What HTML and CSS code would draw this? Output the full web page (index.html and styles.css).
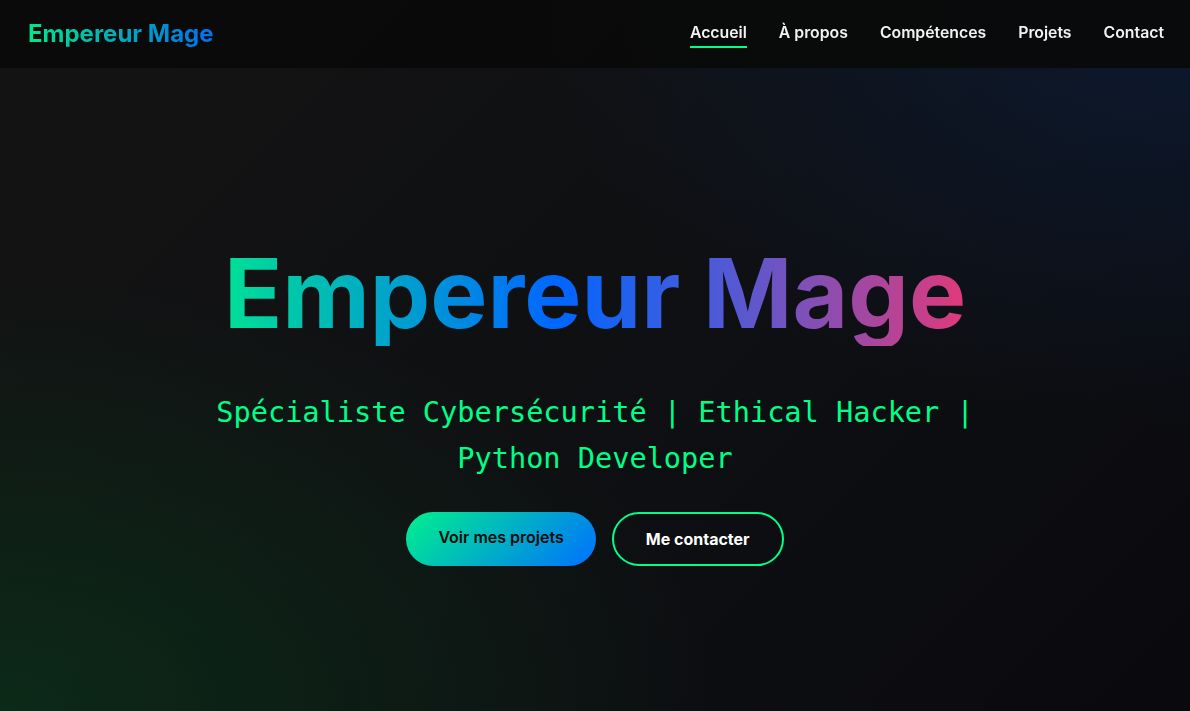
FILE: index.html
```html
<!DOCTYPE html>
<html lang="fr">
<head>
<meta charset="utf-8">
<title>Empereur Mage</title>
<link rel="stylesheet" href="styles.css">
</head>
<body>
<header class="navbar">
  <a class="logo" href="#">Empereur Mage</a>
  <nav class="nav-links">
    <a class="nav-link active" href="#">Accueil</a>
    <a class="nav-link" href="#">À propos</a>
    <a class="nav-link" href="#">Compétences</a>
    <a class="nav-link" href="#">Projets</a>
    <a class="nav-link" href="#">Contact</a>
  </nav>
</header>
<main class="hero">
  <div class="hero-content">
    <h1 class="hero-title">Empereur Mage</h1>
    <p class="hero-subtitle">Spécialiste Cybersécurité | Ethical Hacker | Python Developer</p>
    <div class="hero-buttons">
      <a class="btn btn-primary" href="#">Voir mes projets</a>
      <a class="btn btn-outline" href="#">Me contacter</a>
    </div>
  </div>
</main>
</body>
</html>
```
FILE: styles.css
```css
* { box-sizing: border-box; margin: 0; padding: 0; }
html, body { height: 100%; }
body {
  font-family: Inter, "Noto Sans", sans-serif;
  background: #0a0a0a;
  color: #fff;
  overflow: hidden;
}
a { text-decoration: none; color: inherit; }

.navbar {
  position: fixed;
  top: 0; left: 0; right: 0;
  height: 68px;
  display: flex;
  align-items: center;
  justify-content: space-between;
  padding: 0 26px 2px 28px;
  background: rgba(10,10,10,0.95);
  z-index: 10;
}
.logo {
  font-size: 24px;
  font-weight: 700;
  background: linear-gradient(90deg, #00e68c 0%, #0070f0 100%);
  -webkit-background-clip: text;
  background-clip: text;
  color: transparent;
}
.nav-links { display: flex; gap: 32px; margin-bottom: 2px; }
.nav-link {
  font-size: 15.8px;
  font-weight: 600;
  color: #f2f2f2;
  position: relative;
  padding: 4px 0;
}
.nav-link.active::after {
  content: "";
  position: absolute;
  left: 0; right: 0; bottom: -2px;
  height: 2px;
  background: #00ff88;
}

.hero {
  height: 100vh;
  display: flex;
  align-items: center;
  justify-content: center;
  padding-top: 96px;
  background:
    radial-gradient(ellipse 60% 60% at 0% 100%, rgba(10,50,25,0.75) 0%, rgba(10,40,20,0) 100%),
    radial-gradient(ellipse 55% 60% at 100% 0%, rgba(12,28,55,0.8) 0%, rgba(12,28,55,0) 100%),
    linear-gradient(135deg, #141414 0%, #0e0f12 60%, #0a0a0e 100%);
}
.hero-content {
  display: flex;
  flex-direction: column;
  align-items: center;
  text-align: center;
  max-width: 800px;
}
.hero-title {
  font-size: 96px;
  font-weight: 700;
  line-height: 1.1;
  letter-spacing: 0;
  background: linear-gradient(90deg, #00e096 0%, #0066ff 45%, #5a58d0 70%, #e03a7a 100%);
  -webkit-background-clip: text;
  background-clip: text;
  color: transparent;
  margin-bottom: 43px;
}
.hero-subtitle {
  font-family: "DejaVu Sans Mono", "Liberation Mono", monospace;
  font-size: 28.6px;
  line-height: 46px;
  color: #00ff88;
  margin-bottom: 31px;
}
.hero-buttons { display: flex; gap: 16px; }
.btn {
  display: inline-flex;
  align-items: center;
  justify-content: center;
  height: 54px;
  padding: 0 32px;
  border-radius: 30px;
  font-size: 16px;
  font-weight: 600;
}
.btn-primary {
  background: linear-gradient(135deg, #00f08c 0%, #0070ff 100%);
  color: #0a0a0a;
  padding-bottom: 4px;
}
.btn-outline {
  border: 2px solid #00ff88;
  color: #fff;
  font-weight: 700;
}
```
